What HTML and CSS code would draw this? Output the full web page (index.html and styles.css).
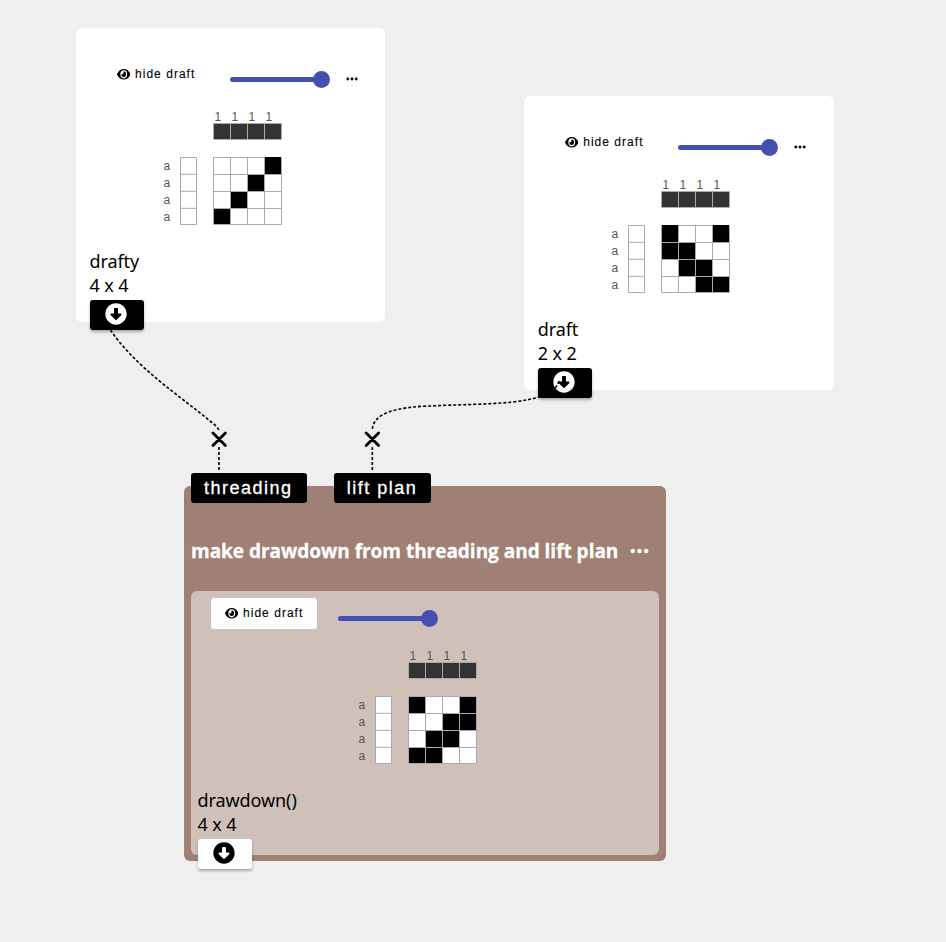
FILE: index.html
```html
<!DOCTYPE html>
<html lang="en">
<head>
<meta charset="utf-8">
<title>Draft workspace</title>
<link rel="stylesheet" href="styles.css">
</head>
<body>
<svg class="defs" width="0" height="0" aria-hidden="true">
  <symbol id="eye" viewBox="0 64 576 384" preserveAspectRatio="none"><path fill-rule="evenodd" d="M572.500 241.400C518.300 135.600 410.900 64 288 64S57.700 135.600 3.500 241.400a32 32 0 0 0 0 29.200C57.700 376.400 165.100 448 288 448s230.300-71.600 284.500-177.400a32 32 0 0 0 0-29.200zM288 110a146 146 0 1 0 0 292 146 146 0 0 0 0-292z"/><path d="M288 158a98 98 0 1 1-96 78 50 50 0 0 0 73-74 98 98 0 0 1 23-4z"/></symbol>
  <symbol id="down" viewBox="0 0 512 512"><path d="M504 256c0 137-111 248-248 248S8 393 8 256 119 8 256 8s248 111 248 248zM210 130v112h-56c-24 0-36 24-18 42l106 106c8 8 20 8 28 0l106-106c18-18 6-42-18-42H302V130c0-10-8-16-16-16h-60c-8 0-16 6-16 16z"/></symbol>
  <symbol id="dots" viewBox="0 0 20 6"><circle cx="3" cy="3" r="2.400"/><circle cx="10" cy="3" r="2.400"/><circle cx="17" cy="3" r="2.400"/></symbol>
  <symbol id="setup" viewBox="0 0 130 120">
    <path class="warp" d="M58 15.500h67v16h-67z"/>
    <path class="line" d="M57.500 15.500h68v16h-68zM74.500 15.500v16M91.500 15.500v16M108.500 15.500v16"/>
    <path class="cells" d="M24.500 49.500h16v67h-16z"/>
    <path class="line" d="M24.500 49.500h16v67h-16zM24.500 66.300h16M24.500 83.300h16M24.500 100.300h16"/>
    <path class="cells" d="M57.500 49.500h68v67h-68z"/>
  </symbol>
  <symbol id="grid" viewBox="0 0 130 120"><path class="line" d="M57.500 49.500h68v67h-68zM74.500 49.500v67M91.500 49.500v67M108.500 49.500v67M57.500 66.500h68M57.500 83.500h68M57.500 100.500h68"/></symbol>
</svg>

<main class="canvas">
  <section class="node draft-node node-a">
    <div class="tools">
      <button class="hide"><svg class="eye"><use href="#eye"/></svg>hide draft</button>
      <div class="slider"><span class="thumb"></span></div>
      <svg class="more"><use href="#dots"/></svg>
    </div>
    <svg class="draft" viewBox="0 0 130 120">
      <use href="#setup"/><use href="#grid"/>
      <g class="label"><text x="58.500" y="13">1</text><text x="75.500" y="13">1</text><text x="92.500" y="13">1</text><text x="109.500" y="13">1</text><text x="7.500" y="62">a</text><text x="7.500" y="79">a</text><text x="7.500" y="96">a</text><text x="7.500" y="113">a</text></g>
      <path d="M109 49h16v17h-16zM92 67h16v16h-16zM75 84h16v16h-16zM58 101h16v15h-16z"/>
    </svg>
    <div class="name">drafty</div>
    <div class="name">4 x 4</div>
    <button class="port"><svg><use href="#down"/></svg></button>
  </section>

  <section class="node draft-node node-b">
    <div class="tools">
      <button class="hide"><svg class="eye"><use href="#eye"/></svg>hide draft</button>
      <div class="slider"><span class="thumb"></span></div>
      <svg class="more"><use href="#dots"/></svg>
    </div>
    <svg class="draft" viewBox="0 0 130 120">
      <use href="#setup"/><use href="#grid"/>
      <g class="label"><text x="58.500" y="13">1</text><text x="75.500" y="13">1</text><text x="92.500" y="13">1</text><text x="109.500" y="13">1</text><text x="7.500" y="62">a</text><text x="7.500" y="79">a</text><text x="7.500" y="96">a</text><text x="7.500" y="113">a</text></g>
      <path d="M58 49h16v17h-16zM109 49h16v17h-16zM58 67h16v16h-16zM75 67h16v16h-16zM75 84h16v16h-16zM92 84h16v16h-16zM92 101h16v15h-16zM109 101h16v15h-16z"/>
    </svg>
    <div class="name">draft</div>
    <div class="name">2 x 2</div>
    <button class="port"><svg><use href="#down"/></svg></button>
  </section>

  <section class="node operation">
    <div class="inlets"><button class="inlet threading">threading</button><button class="inlet lift">lift plan</button></div>
    <header class="title"><h1>make drawdown from threading and lift plan</h1><svg class="more"><use href="#dots"/></svg></header>
    <div class="result">
      <div class="tools">
        <button class="hide"><svg class="eye"><use href="#eye"/></svg>hide draft</button>
        <div class="slider"><span class="thumb"></span></div>
      </div>
      <svg class="draft" viewBox="0 0 130 120">
        <use href="#setup"/><use href="#grid"/>
        <g class="label"><text x="58.500" y="13">1</text><text x="75.500" y="13">1</text><text x="92.500" y="13">1</text><text x="109.500" y="13">1</text><text x="7.500" y="62">a</text><text x="7.500" y="79">a</text><text x="7.500" y="96">a</text><text x="7.500" y="113">a</text></g>
        <path d="M58 50h16v16h-16zM109 50h16v16h-16zM92 67h16v16h-16zM109 67h16v16h-16zM75 84h16v16h-16zM92 84h16v16h-16zM58 101h16v15h-16zM75 101h16v15h-16z"/>
      </svg>
      <div class="name">drawdown()</div>
      <div class="name">4 x 4</div>
      <button class="port"><svg><use href="#down"/></svg></button>
    </div>
  </section>

  <svg class="wires" viewBox="0 0 946 942">
    <path class="wire" d="M110.500 330C136 368 184 399 210 421Q219 428 219 431M219 447V472"/>
    <path class="wire" d="M559 381C552 407 482 403 430 406C399 407 372 412 372.300 431M372.300 447V472"/>
    <path class="cross" d="M213 433l12.400 12.400M225.400 433l-12.400 12.400M366.200 433l12.400 12.400M378.600 433l-12.400 12.400"/>
  </svg>
</main>
</body>
</html>
```
FILE: styles.css
```css
* { box-sizing: border-box; }
body { margin: 0; background: #efefef; color: #000; font-family: "Noto Sans", sans-serif; }
button { border: 0; margin: 0; padding: 0; font-family: "Liberation Sans", sans-serif; }
svg { display: block; flex: none; }
.defs { position: absolute; }
.canvas { position: relative; width: 946px; height: 942px; overflow: hidden; }
.node { position: absolute; border-radius: 6px; }
.draft-node { width: 309.400px; height: 294px; padding: 31px 13.500px 0; background: #fff; }
.node-a { left: 76px; top: 28px; }
.node-b { left: 524.200px; top: 96px; }
.tools { display: flex; height: 30px; margin-left: 13.500px; }
.hide { display: flex; align-items: center; width: 106px; height: 30.500px; padding-left: 13.500px; border-radius: 3px; background: #fff; color: #000; font-size: 12px; letter-spacing: 1.030px; white-space: nowrap; -webkit-text-stroke: .1px #000; }
.eye { width: 13.500px; height: 10.700px; margin-right: 5px; }
.slider { display: flex; align-items: center; justify-content: flex-end; width: 92px; height: 5px; margin: 17.500px 0 0 20.500px; border-radius: 3px; background: #4350b0; }
.thumb { width: 17px; height: 17px; margin-right: -8.500px; flex: none; border-radius: 50%; background: #4350b0; }
.more { width: 12px; height: 4px; }
.draft-node .more { margin: 17.500px 0 0 24.500px; }
.draft { width: 130px; height: 120px; margin: 19px 0 21px 66.500px; }
.label { font: 12px "Liberation Sans", sans-serif; fill: #555; }
.warp { fill: #333; }
.cells { fill: #fff; }
.line { fill: none; stroke: #aaa; stroke-width: 1; }
.name { height: 24px; font-size: 18px; line-height: 24px; letter-spacing: -.08px; white-space: nowrap; }
.port { display: flex; align-items: center; justify-content: center; width: 54.500px; height: 30.500px; margin-top: 2.500px; padding-right: 2px; border-radius: 3px; background: #000; box-shadow: 0 2px 3px rgba(0,0,0,.3); }
.port svg { width: 22px; height: 22px; margin-top: -2px; fill: #fff; }
.operation { left: 184px; top: 486px; width: 482.300px; height: 375.300px; padding: 0 7px; background: #a08074; }
.inlets { display: flex; gap: 27px; height: 30px; margin-top: -13.500px; }
.inlet { height: 30.500px; padding-left: 13px; border-radius: 3px; background: #000; color: #fff; font-size: 18px; letter-spacing: 1.500px; line-height: 30px; text-align: left; white-space: nowrap; -webkit-text-stroke: .3px #fff; }
.threading { width: 115.700px; }
.lift { width: 97.700px; }
.title { display: flex; align-items: center; gap: 12px; height: 24px; margin-top: 36.500px; color: #fff; }
h1 { margin: 0; font: 700 19px/24px "Open Sans", sans-serif; letter-spacing: -.02px; white-space: nowrap; -webkit-text-stroke: .3px #fff; }
.title .more { width: 19px; height: 6px; fill: #fff; }
.result { height: 264px; margin-top: 28px; padding: 7px 6.500px 0; border-radius: 6px; background: #cfc1ba; }
.result .draft { margin-left: 153.500px; }
.result .port { background: #fff; }
.result .port svg { fill: #000; }
.wires { position: absolute; inset: 0; width: 946px; height: 942px; pointer-events: none; }
.wire { fill: none; stroke: #000; stroke-width: 1.600; stroke-dasharray: 3 2; }
.cross { fill: none; stroke: #000; stroke-width: 2.800; stroke-linecap: round; }
```
